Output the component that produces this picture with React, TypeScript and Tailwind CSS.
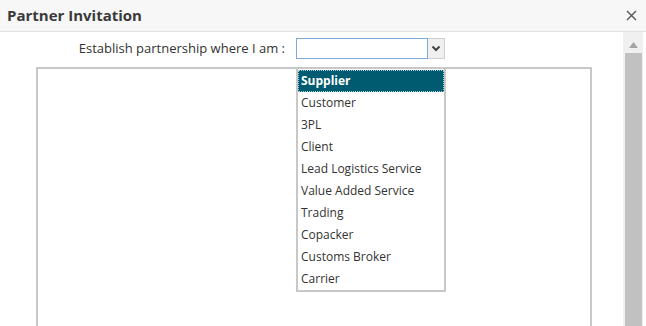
import { useState } from 'react';

const roles = [
  'Supplier',
  'Customer',
  '3PL',
  'Client',
  'Lead Logistics Service',
  'Value Added Service',
  'Trading',
  'Copacker',
  'Customs Broker',
  'Carrier',
];

function Chevron() {
  return (
    <svg width="10" height="7" viewBox="0 0 10 7" fill="none">
      <path d="M1.5 1.5 L5 5 L8.5 1.5" stroke="#444" strokeWidth="2" />
    </svg>
  );
}

function RoleDropdown({ selected }: { selected: number }) {
  return (
    <div className="absolute left-[296px] top-[67px] w-[150px] bg-white border-2 border-[#c8c8c8] pt-[1px]">
      {roles.map((r, i) =>
        i === selected ? (
          <div
            key={r}
            className="h-[22px] leading-[20px] px-[2px] bg-[#005a70] text-white font-bold border border-dotted border-[#9fd0e0]"
          >
            {r}
          </div>
        ) : (
          <div key={r} className="h-[22px] leading-[22px] px-[3px] text-[#333]">
            {r}
          </div>
        ),
      )}
    </div>
  );
}

export default function App() {
  const [selected] = useState(0);

  return (
    <div
      className="relative w-[646px] h-[326px] overflow-hidden bg-white text-[12px]"
      style={{ fontFamily: '"Open Sans", "Liberation Sans", sans-serif' }}
    >
      <div className="h-[32px] flex items-center justify-between px-[7px] bg-[#f7f7f7] border-b border-[#e2e2e2]">
        <span className="text-[15px] font-bold text-[#3a3a3a]">Partner Invitation</span>
        <svg width="11" height="11" viewBox="0 0 11 11" className="mr-[2px]">
          <path d="M1 1 L10 10 M10 1 L1 10" stroke="#555" strokeWidth="1.4" />
        </svg>
      </div>

      <div className="flex h-[294px]">
        <div className="flex-1 pl-[36px] pt-[6px]">
          <div className="flex items-center h-[21px]">
            <div className="w-[249px] text-right text-[13px] text-[#333]">Establish partnership where I am :</div>
            <div className="ml-[11px] flex h-[21px]">
              <div className="w-[132px] border border-[#7eaadb] bg-white" />
              <div className="w-[17px] flex items-center justify-center bg-[#f0f0f0] border border-l-0 border-[#cfcfcf]">
                <Chevron />
              </div>
            </div>
          </div>
          <div className="mt-[8px] w-[556px] h-[400px] border-2 border-[#c8c8c8]" />
        </div>

        <div className="w-[20px] mr-[3px] bg-[#f0f0f0] flex flex-col items-center">
          <svg width="9" height="6" viewBox="0 0 9 6" className="mt-[10px]">
            <path d="M0 6 L4.5 0 L9 6 Z" fill="#a3a3a3" />
          </svg>
          <div className="mt-[5px] w-[17px] flex-1 bg-[#c1c1c1]" />
        </div>
      </div>

      <RoleDropdown selected={selected} />
    </div>
  );
}
